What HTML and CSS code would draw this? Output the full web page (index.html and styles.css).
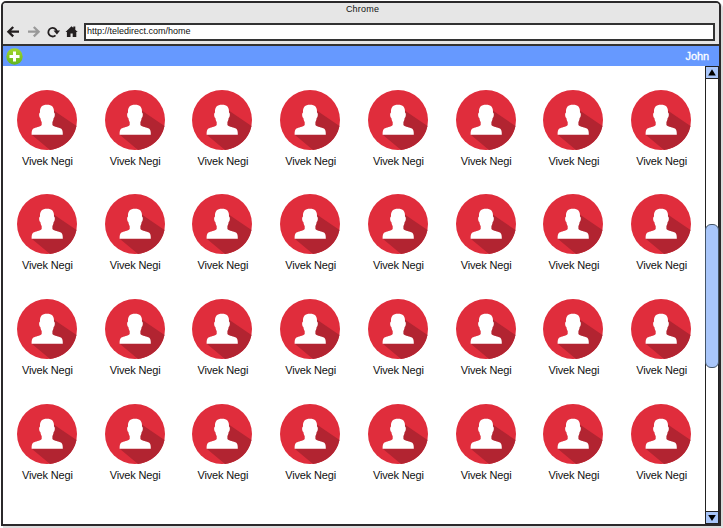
FILE: index.html
```html
<!DOCTYPE html>
<html lang="en">
<head>
<meta charset="utf-8">
<title>Teledirect</title>
<link rel="stylesheet" href="styles.css">
</head>
<body>
<svg class="defs" aria-hidden="true">
  <symbol id="avatar" viewBox="0 0 60 60">
    <circle cx="30" cy="30" r="30" fill="#e02d3c"/>
    <path d="M36 20L59.5 36A30 30 0 0 1 33 59.9L14.7 44.7L30 38Z" fill="#b22431"/>
    <path d="M30 14.8C35 14.8 37.3 17.2 37 22.4C38.4 23 37.9 27.2 36.6 28C36.5 29.8 36 31 35.4 32V35C37 37 42 37.3 44 38.6C45.5 39.6 45.8 41.5 45.8 44.8H14.6C14.6 41.5 14.9 39.6 16.4 38.6C18.4 37.3 23.2 37 24.7 35V32C24 31 23.6 29.8 23.4 28C22.1 27.2 21.6 23 23 22.4C22.7 17.2 25 14.8 30 14.8Z" fill="#fff"/>
  </symbol>
</svg>
<div class="window">
  <header class="chrome">
    <div class="title">Chrome</div>
    <div class="toolbar">
      <svg class="tools" viewBox="0 0 80 18" width="81" height="18">
        <g fill="none" stroke-width="2.3">
          <path d="M9.7 4L4.9 8.7L9.7 13.4M5.3 8.7H15.5" stroke="#231f20"/>
          <path d="M30.3 4L35.1 8.7L30.3 13.4M34.7 8.7H24.5" stroke="#999"/>
          <path d="M52 12.4A4.3 4.3 0 1 1 53.3 8.2" stroke="#231f20" stroke-width="1.8"/>
        </g>
        <path d="M50 7.5H56.6L53.4 11.4Z" fill="#231f20"/>
        <path d="M62 9L68 3.2L69.8 4.8V3.6H71.8V6.8L74.2 9H72.8V14H69.2V10.5H67V14H63.4V9Z" fill="#231f20"/>
      </svg>
      <div class="address">http://teledirect.com/home</div>
    </div>
  </header>
  <div class="appbar">
    <svg class="add" viewBox="0 0 17 17" width="17" height="17">
      <defs><linearGradient id="green" x2="0" y2="1"><stop stop-color="#a5d82d"/><stop offset="1" stop-color="#62b51f"/></linearGradient></defs>
      <circle cx="8.5" cy="8.5" r="8.2" fill="url(#green)"/>
      <path d="M7 3.5H10V7H13.5V10H10V13.5H7V10H3.5V7H7Z" fill="#fff"/>
    </svg>
    <span class="user">John</span>
  </div>
  <div class="body">
    <main class="grid" id="grid"></main>
    <div class="scrollbar">
      <div class="button"><svg viewBox="0 0 12 11" width="12" height="11"><path d="M6 2.2L9.8 8.5H2.2Z"/></svg></div>
      <div class="track"><div class="thumb"></div></div>
      <div class="button"><svg viewBox="0 0 12 11" width="12" height="11"><path d="M6 9L9.8 3H2.2Z"/></svg></div>
    </div>
  </div>
</div>
<script src="contacts.js"></script>
</body>
</html>
```
FILE: contacts.js
```js
const grid = document.getElementById('grid');
for (let i = 0; i < 32; i++) {
  const card = document.createElement('div');
  card.className = 'contact';
  card.innerHTML = '<svg class="avatar" width="60" height="60"><use href="#avatar"/></svg><span>Vivek Negi</span>';
  grid.appendChild(card);
}
```
FILE: styles.css
```css
* { box-sizing: border-box; }
body {
  margin: 0;
  height: 528px;
  padding: 1px 2px 2px 1px;
  overflow: hidden;
  background: #fff;
  font-family: "Liberation Sans", Arial, sans-serif;
  color: #111;
}
.defs { display: none; }
.window {
  height: 525px;
  display: flex;
  flex-direction: column;
  border: 2px solid #2b292b;
  border-radius: 5px 5px 0 0;
  background: #fff;
  box-shadow: 2px 2px 0 #ddd;
}
.chrome {
  height: 43px;
  flex: none;
  background: #e6e6e6;
  border-bottom: 2px solid #333;
  border-radius: 3px 3px 0 0;
}
.title {
  height: 20px;
  padding: 1px 0 0 3px;
  text-align: center;
  font-size: 9px;
  line-height: 11px;
  letter-spacing: .2px;
}
.toolbar { display: flex; padding-right: 4px; }
.tools { flex: none; }
.address {
  flex: 1;
  height: 18px;
  padding-left: 1px;
  border: 2px solid #333;
  background: #fff;
  font-size: 9px;
  line-height: 13px;
}
.appbar {
  height: 20px;
  flex: none;
  display: flex;
  align-items: center;
  justify-content: space-between;
  padding: 0 10px 0 3px;
  background: #6699ff;
}
.user {
  color: #fff;
  font-size: 11px;
  letter-spacing: -.1px;
  -webkit-text-stroke: .3px #fff;
}
.body { flex: 1; min-height: 0; display: flex; }
.grid {
  flex: 1;
  display: grid;
  grid-template-columns: repeat(8, 87.75px);
  grid-auto-rows: 104.8px;
  padding-top: 23.6px;
}
.contact {
  display: flex;
  flex-direction: column;
  align-items: center;
  font-size: 11px;
  line-height: 13px;
}
.contact span { padding-left: 1px; letter-spacing: -.15px; }
.avatar { margin-bottom: 5px; }
.scrollbar {
  width: 14px;
  flex: none;
  margin-right: 1px;
  display: flex;
  flex-direction: column;
  border: 1px solid #222;
}
.button { height: 12px; background: #a9c6fa; }
.button svg { display: block; }
.button:first-child { border-bottom: 1px solid #222; }
.button:last-child { border-top: 1px solid #222; }
.track { flex: 1; padding-top: 145px; }
.thumb {
  height: 144px;
  margin: 0 -1px;
  border: 1px solid #456;
  border-radius: 6px;
  background: #a9c6fa;
}
```
